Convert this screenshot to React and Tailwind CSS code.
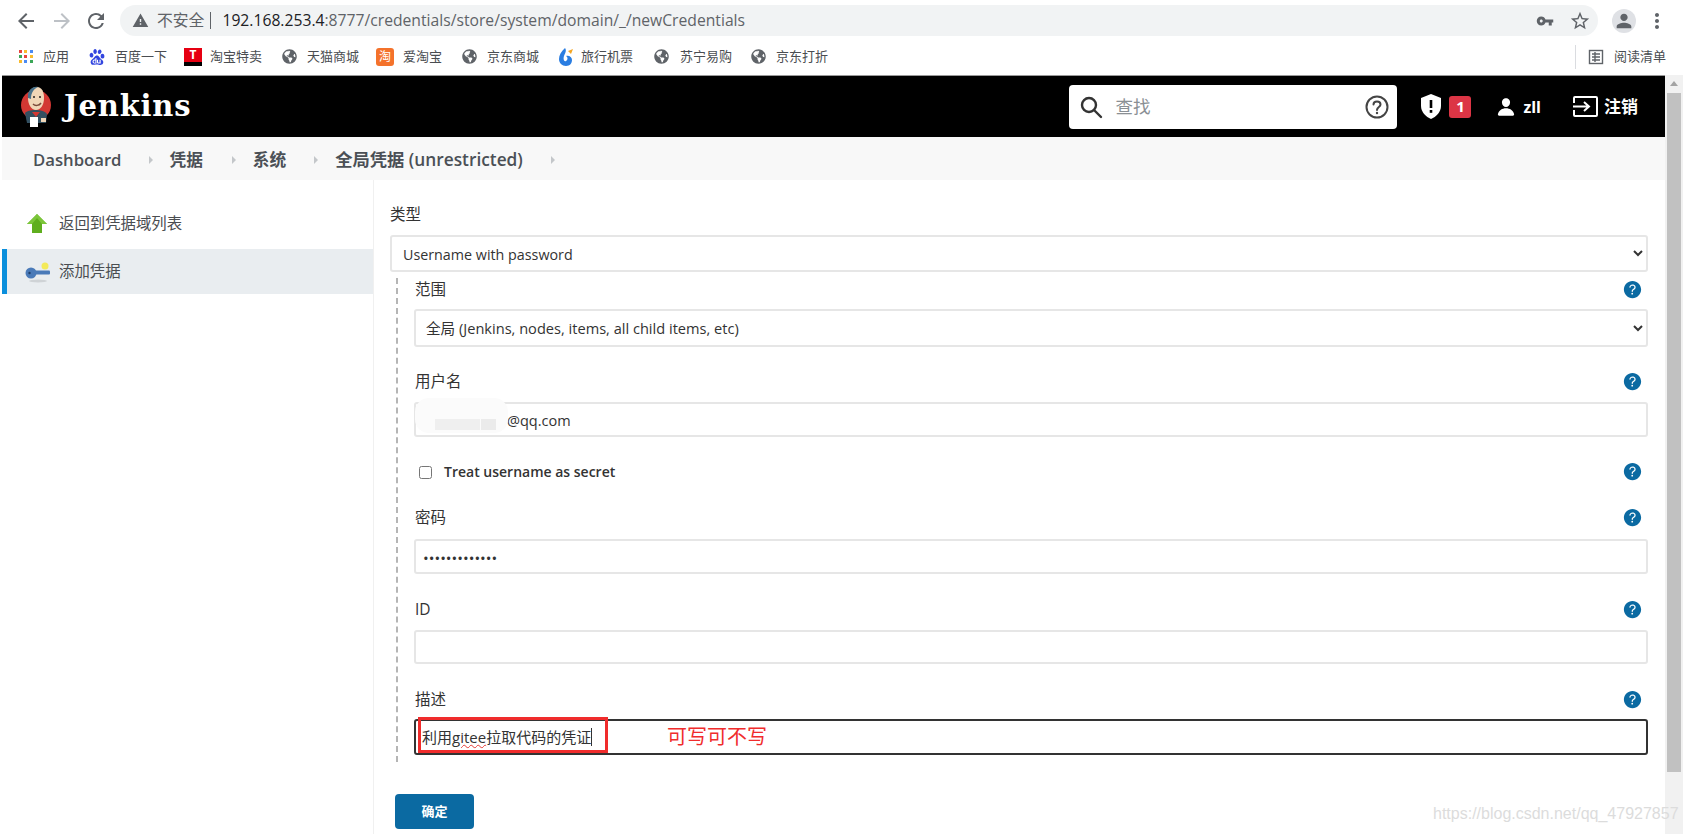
import { MdArrowBack, MdArrowForward, MdRefresh, MdStarBorder, MdMoreVert, MdPerson, MdWarning, MdVpnKey } from "react-icons/md";
import { FaGlobeAmericas } from "react-icons/fa";
import { SiBaidu } from "react-icons/si";
import { IoHelpCircle, IoPerson } from "react-icons/io5";

const SANS = "font-['Open_Sans','Noto_Sans_CJK_SC',sans-serif]";

function AppsIcon() {
  const colors = ["#e8453c", "#f9bb2d", "#4a8af4", "#3aa757", "#e8453c", "#f9bb2d", "#f9bb2d", "#4a8af4", "#3aa757"];
  return (
    <span className="grid h-[14px] w-[14px] grid-cols-3 gap-[2px]">
      {colors.map((c, i) => (
        <span key={i} style={{ backgroundColor: c }} className="h-[3px] w-[3px]" />
      ))}
    </span>
  );
}

function TIcon() {
  return (
    <span className="flex h-[18px] w-[18px] flex-col">
      <span className="flex h-[14px] items-center justify-center bg-[#e60012] text-[12px] leading-none font-bold text-white">T</span>
      <span className="h-[4px] bg-black" />
    </span>
  );
}

function TaoIcon() {
  return (
    <span className="flex h-[18px] w-[18px] items-center justify-center rounded-[3px] bg-[#f4722b] text-[12px] leading-none text-white">淘</span>
  );
}

function RocketIcon() {
  return (
    <svg width="18" height="20" viewBox="0 0 18 20">
      <path d="M9 1 C5 5 3 8 3 12 C3 16 6 19 10 19 C14 19 16 16 16 13 C16 10 13 8 10 9 C12 10 12 13 10 14 C8 15 7 12 8 9 C9 6 11 4 9 1Z" fill="#2a7de1" />
      <path d="M12 4 L17 2 L15 7Z" fill="#f5a623" />
    </svg>
  );
}

function Globe() {
  return <FaGlobeAmericas className="text-[15px] text-[#5f6368]" />;
}

const bookmarks = [
  { w: "w-[71px]", gap: "gap-[8px]", icon: <AppsIcon />, text: "应用" },
  { w: "w-[96px]", gap: "gap-[9px]", icon: <SiBaidu className="text-[16px] text-[#3245df]" />, text: "百度一下" },
  { w: "w-[96px]", gap: "gap-[8px]", icon: <TIcon />, text: "淘宝特卖" },
  { w: "w-[96px]", gap: "gap-[9px]", icon: <Globe />, text: "天猫商城" },
  { w: "w-[84px]", gap: "gap-[9px]", icon: <TaoIcon />, text: "爱淘宝" },
  { w: "w-[96px]", gap: "gap-[9px]", icon: <Globe />, text: "京东商城" },
  { w: "w-[96px]", gap: "gap-[7px]", icon: <RocketIcon />, text: "旅行机票" },
  { w: "w-[97px]", gap: "gap-[10px]", icon: <Globe />, text: "苏宁易购" },
  { w: "w-auto", gap: "gap-[9px]", icon: <Globe />, text: "京东打折" },
];

function BrowserChrome() {
  return (
    <div className="shrink-0 bg-white">
      <div className="flex h-[41px] items-center pl-[14px] pb-[1px] pt-[1px]">
        <MdArrowBack className="text-[24px] text-[#5f6368]" />
        <MdArrowForward className="ml-[12px] text-[24px] text-[#bdc1c6]" />
        <MdRefresh className="ml-[10px] text-[24px] text-[#5f6368]" />
        <div className="ml-[12px] flex h-[31px] w-[1478px] items-center rounded-full bg-[#f1f3f4] pl-[12px] pr-[7px]">
          <MdWarning className="text-[17px] text-[#5f6368]" />
          <span className="ml-[8px] text-[15.8px] leading-none text-[#5f6368]">不安全</span>
          <span className="ml-[6px] h-[17px] w-px bg-[#5f6368]" />
          <span className="ml-[11px] text-[15.7px] leading-none text-[#202124]">
            192.168.253.4<span className="text-[#5f6368]">:8777/credentials/store/system/domain/_/newCredentials</span>
          </span>
          <MdVpnKey className="ml-auto text-[18px] text-[#5f6368]" />
          <MdStarBorder className="ml-[15px] text-[22px] text-[#5f6368]" />
        </div>
        <div className="ml-[14px] flex h-[24px] w-[24px] items-center justify-center rounded-full bg-[#dfe1e5]">
          <MdPerson className="text-[22px] text-[#5f6368]" />
        </div>
        <MdMoreVert className="ml-[9px] text-[24px] text-[#5f6368]" />
      </div>
      <div className="flex h-[34px] items-center pb-[3px] pl-[17px] pr-[17px]">
        {bookmarks.map((b) => (
          <div key={b.text} className={`flex items-center ${b.gap} ${b.w}`}>
            <span className="flex h-[20px] w-[18px] items-center justify-center">{b.icon}</span>
            <span className="text-[13px] leading-none whitespace-nowrap text-[#4a4d51]">{b.text}</span>
          </div>
        ))}
        <span className="ml-auto h-[24px] w-px bg-[#dadce0]" />
        <svg className="ml-[12px]" width="16" height="16" viewBox="0 0 16 16" fill="none" stroke="#5f6368" strokeWidth="1.4">
          <rect x="1.5" y="1.5" width="13" height="13" />
          <path d="M4 5h8M4 8h8M4 11h8M7 3v10" />
        </svg>
        <span className="ml-[10px] text-[13px] leading-none text-[#4a4d51]">阅读清单</span>
      </div>
    </div>
  );
}

function JenkinsLogo() {
  return (
    <svg width="32" height="42" viewBox="0 0 32 42">
      <circle cx="16" cy="19" r="15" fill="#d33833" />
      <path d="M5 27 C8 23 24 23 27 28 L26 37 L7 37Z" fill="#335061" />
      <path d="M12 26 L20 26 L16 31Z" fill="#d33833" />
      <path d="M8 12 C8 4 13 1 17 1 C22 1 24 6 24 12 C24 20 20 24 16 24 C11 24 8 18 8 12Z" fill="#f0d6b7" />
      <path d="M8 12 C7 4 13 0 18 1 C14 3 11 6 11 13Z" fill="#49728b" />
      <path d="M13 18 C15 20 19 20 21 17" stroke="#7a4a3a" strokeWidth="1.5" fill="none" />
      <circle cx="14" cy="11" r="1" fill="#231f20" />
      <circle cx="20" cy="11" r="1" fill="#231f20" />
      <path d="M10 31 H18 V41 H10Z" fill="#fff" />
      <path d="M21 32 h5 v4 h-5Z" fill="#f0d6b7" />
    </svg>
  );
}

function JenkinsHeader() {
  return (
    <header className="flex h-[61px] shrink-0 items-center bg-black pl-[18px] text-white">
      <JenkinsLogo />
      <span className="ml-[12px] font-['DejaVu_Serif',serif] text-[29px] leading-none font-bold tracking-[0.8px]">Jenkins</span>
      <div className="ml-auto flex h-[44px] w-[328px] items-center rounded-[4px] bg-white pl-[10px] pr-[8px]">
        <svg width="24" height="24" viewBox="0 0 24 24" fill="none" stroke="#333" strokeWidth="2.4">
          <circle cx="10" cy="10" r="7" />
          <path d="M15 15 L22 22" strokeLinecap="round" />
        </svg>
        <span className="ml-[12px] text-[17.5px] leading-none text-[#8a8f94]">查找</span>
        <svg className="ml-auto" width="24" height="24" viewBox="0 0 24 24" fill="none" stroke="#444" strokeWidth="2">
          <circle cx="12" cy="12" r="10.5" />
          <path d="M8.5 9.5 C8.5 5.5 15.5 5.5 15.5 9.5 C15.5 12 12 12 12 15" strokeLinecap="round" />
          <circle cx="12" cy="18" r="1.2" fill="#444" stroke="none" />
        </svg>
      </div>
      <svg className="ml-[24px]" width="20" height="25" viewBox="0 0 20 25">
        <path d="M10 0 L20 4 V12 C20 18 15 23 10 25 C5 23 0 18 0 12 V4Z" fill="#fff" />
        <rect x="8.7" y="6" width="2.6" height="8" fill="#000" />
        <rect x="8.7" y="16" width="2.6" height="2.8" fill="#000" />
      </svg>
      <span className="ml-[8px] flex h-[22px] w-[22px] items-center justify-center rounded-[3px] bg-[#dc3545] text-[15px] leading-none font-bold">1</span>
      <IoPerson className="ml-[25px] text-[20px]" />
      <span className={`ml-[7px] text-[16px] leading-none font-bold ${SANS}`}>zll</span>
      <svg className="ml-[32px]" width="25" height="21" viewBox="0 0 25 21" fill="none" stroke="#fff" strokeWidth="2">
        <path d="M1 7 V2 Q1 1 2 1 H23 Q24 1 24 2 V19 Q24 20 23 20 H2 Q1 20 1 19 V14" />
        <path d="M0 10.5 H15 M11 6 L16 10.5 L11 15" />
      </svg>
      <span className="ml-[6px] text-[17px] leading-none font-bold">注销</span>
      <span className="w-[27px]" />
    </header>
  );
}

function Caret() {
  return <span className="h-0 w-0 border-y-[4px] border-l-[4px] border-y-transparent border-l-[#c4c7ca]" />;
}

function Breadcrumb() {
  return (
    <nav className="flex h-[43px] shrink-0 items-center bg-[#f8f8f8] pl-[31px] pt-[3px] text-[16.7px] leading-none font-semibold text-[#4b5056]">
      <span>Dashboard</span>
      <span className="ml-[28px] flex"><Caret /></span>
      <span className="ml-[16px]">凭据</span>
      <span className="ml-[29px] flex"><Caret /></span>
      <span className="ml-[17px]">系统</span>
      <span className="ml-[28px] flex"><Caret /></span>
      <span className="ml-[17px] text-[17.3px]">全局凭据 (unrestricted)</span>
      <span className="ml-[28px] flex"><Caret /></span>
    </nav>
  );
}

function Sidebar() {
  return (
    <aside className="w-[371px] shrink-0 pt-[25px] text-[15.4px] leading-none text-[#4a4d51]">
      <div className="flex h-[38px] items-center pl-[24px]">
        <svg width="22" height="22" viewBox="0 0 22 22">
          <path d="M11 1 L21 11 H16 V20 H6 V11 H1Z" fill="#5fae1e" />
          <path d="M11 1 L21 11 H16 L11 5 L6 11 H1Z" fill="#7cc63a" />
        </svg>
        <span className="ml-[11px]">返回到凭据域列表</span>
      </div>
      <div className="mt-[6px] flex h-[45px] items-center border-l-[5px] border-[#0b8fdc] bg-[#e9edf0] pl-[18px]">
        <svg width="26" height="22" viewBox="0 0 26 22">
          <ellipse cx="13" cy="20" rx="9" ry="1.5" fill="#cfd3d6" />
          <circle cx="6" cy="12" r="5.5" fill="#4a7ab8" />
          <circle cx="4.5" cy="12" r="1.2" fill="#1f3f6b" />
          <rect x="10" y="9.5" width="15" height="4" rx="1" fill="#4a7ab8" />
          <circle cx="20" cy="5" r="3.5" fill="#f3ea5a" />
        </svg>
        <span className="ml-[8px]">添加凭据</span>
      </div>
    </aside>
  );
}

function Help() {
  return <IoHelpCircle className="-mt-[2px] text-[23px] text-[#0b6aa2]" />;
}

function LabelRow({ label, mt }) {
  return (
    <div className={`flex h-[24px] items-center justify-between pl-[1px] pr-[4px] ${mt}`}>
      <span className="text-[15.5px] leading-none text-[#333]">{label}</span>
      <Help />
    </div>
  );
}

const inputBox = "block w-full rounded-[3px] border-2 border-[#e6e6e6] bg-white text-[#333] outline-none";

function CredentialForm() {
  return (
    <main className="flex-1 border-l border-[#f0f0f0] pl-[16px] pr-[17px] pt-[23px]">
      <div className="flex h-[24px] items-center text-[15.5px] leading-none text-[#333]">类型</div>
      <select className={`mt-[8px] h-[37px] pl-[7px] pt-[2px] text-[14.3px] ${inputBox}`} defaultValue="up">
        <option value="up">Username with password</option>
      </select>
      <div className="ml-[6px] mt-[6px] flex flex-col border-l-2 border-dashed border-[#b5b5b5] pl-[16px]">
        <LabelRow label="范围" mt="mt-0" />
        <select className={`mt-[7px] h-[38px] pl-[6px] text-[14.6px] ${inputBox}`} defaultValue="g">
          <option value="g">全局 (Jenkins, nodes, items, all child items, etc)</option>
        </select>
        <LabelRow label="用户名" mt="mt-[23px]" />
        <div className="relative mt-[8px]">
          <input readOnly defaultValue="@qq.com" className={`h-[35px] pl-[91px] pt-[1px] text-[14.5px] ${inputBox}`} />
          <div className="absolute left-[1px] top-[-4px] h-[35px] w-[93px] rounded-[14px] bg-[#fbfbfb]">
            <span className="absolute left-[20px] top-[21px] h-[11px] w-[45px] bg-[#efefef]" />
            <span className="absolute left-[66px] top-[21px] h-[11px] w-[15px] bg-[#ebebeb]" />
          </div>
        </div>
        <div className="mt-[23px] flex h-[24px] items-center pr-[4px]">
          <input type="checkbox" readOnly className="ml-[5px] h-[13px] w-[13px]" />
          <span className={`ml-[12px] text-[14px] leading-none font-semibold text-[#333] ${SANS}`}>Treat username as secret</span>
          <span className="ml-auto flex"><Help /></span>
        </div>
        <LabelRow label="密码" mt="mt-[22px]" />
        <input readOnly type="password" defaultValue="password12345" className={`mt-[9px] h-[35px] pl-[7px] pt-[3px] text-[15.2px] ${inputBox}`} />
        <LabelRow label="ID" mt="mt-[24px]" />
        <input readOnly className={`mt-[8px] h-[34px] pl-[9px] text-[14.5px] ${inputBox}`} />
        <LabelRow label="描述" mt="mt-[24px]" />
        <div className="relative mt-[7px] pb-[7px]">
          <div className="flex h-[36px] items-center rounded-[3px] border-2 border-[#333] bg-white pl-[6px] text-[15px] leading-none text-[#333]">
            <span>利用</span>
            <span className="underline decoration-[#e53935] decoration-wavy decoration-1">gitee</span>
            <span>拉取代码的凭证</span>
            <span className="h-[18px] w-px bg-[#333]" />
          </div>
          <div className="absolute left-[4px] top-[-2px] h-[36px] w-[190px] border-[3px] border-[#f02c2c]" />
          <span className="absolute left-[253px] top-[8px] text-[20px] leading-none text-[#f02c2c]">可写可不写</span>
        </div>
      </div>
      <button className="ml-[5px] mt-[32px] flex h-[35px] w-[79px] items-center justify-center rounded-[4px] bg-[#0b6aa2] text-[13px] leading-none font-bold text-white">
        确定
      </button>
    </main>
  );
}

function Scrollbar() {
  return (
    <div className="flex w-[18px] shrink-0 flex-col items-center bg-[#f1f1f1]">
      <span className="mt-[6px] h-0 w-0 border-x-[4px] border-b-[5px] border-x-transparent border-b-[#a3a3a3]" />
      <span className="mt-[7px] h-[679px] w-[14px] bg-[#c1c1c1]" />
    </div>
  );
}

export default function App() {
  return (
    <div className={`relative flex h-[834px] w-[1685px] flex-col overflow-hidden bg-white pr-[2px] ${SANS}`}>
      <BrowserChrome />
      <div className="flex min-h-0 flex-1 pl-[2px]">
        <div className="flex min-w-0 flex-1 flex-col border-t border-[#999]">
          <JenkinsHeader />
          <Breadcrumb />
          <div className="flex min-h-0 flex-1">
            <Sidebar />
            <CredentialForm />
          </div>
        </div>
        <Scrollbar />
      </div>
      <span className="absolute left-[1433px] top-[804px] font-['Liberation_Sans',sans-serif] text-[16px] leading-[20px] whitespace-nowrap text-[#dcdcdc]">
        https://blog.csdn.net/qq_47927857
      </span>
    </div>
  );
}
